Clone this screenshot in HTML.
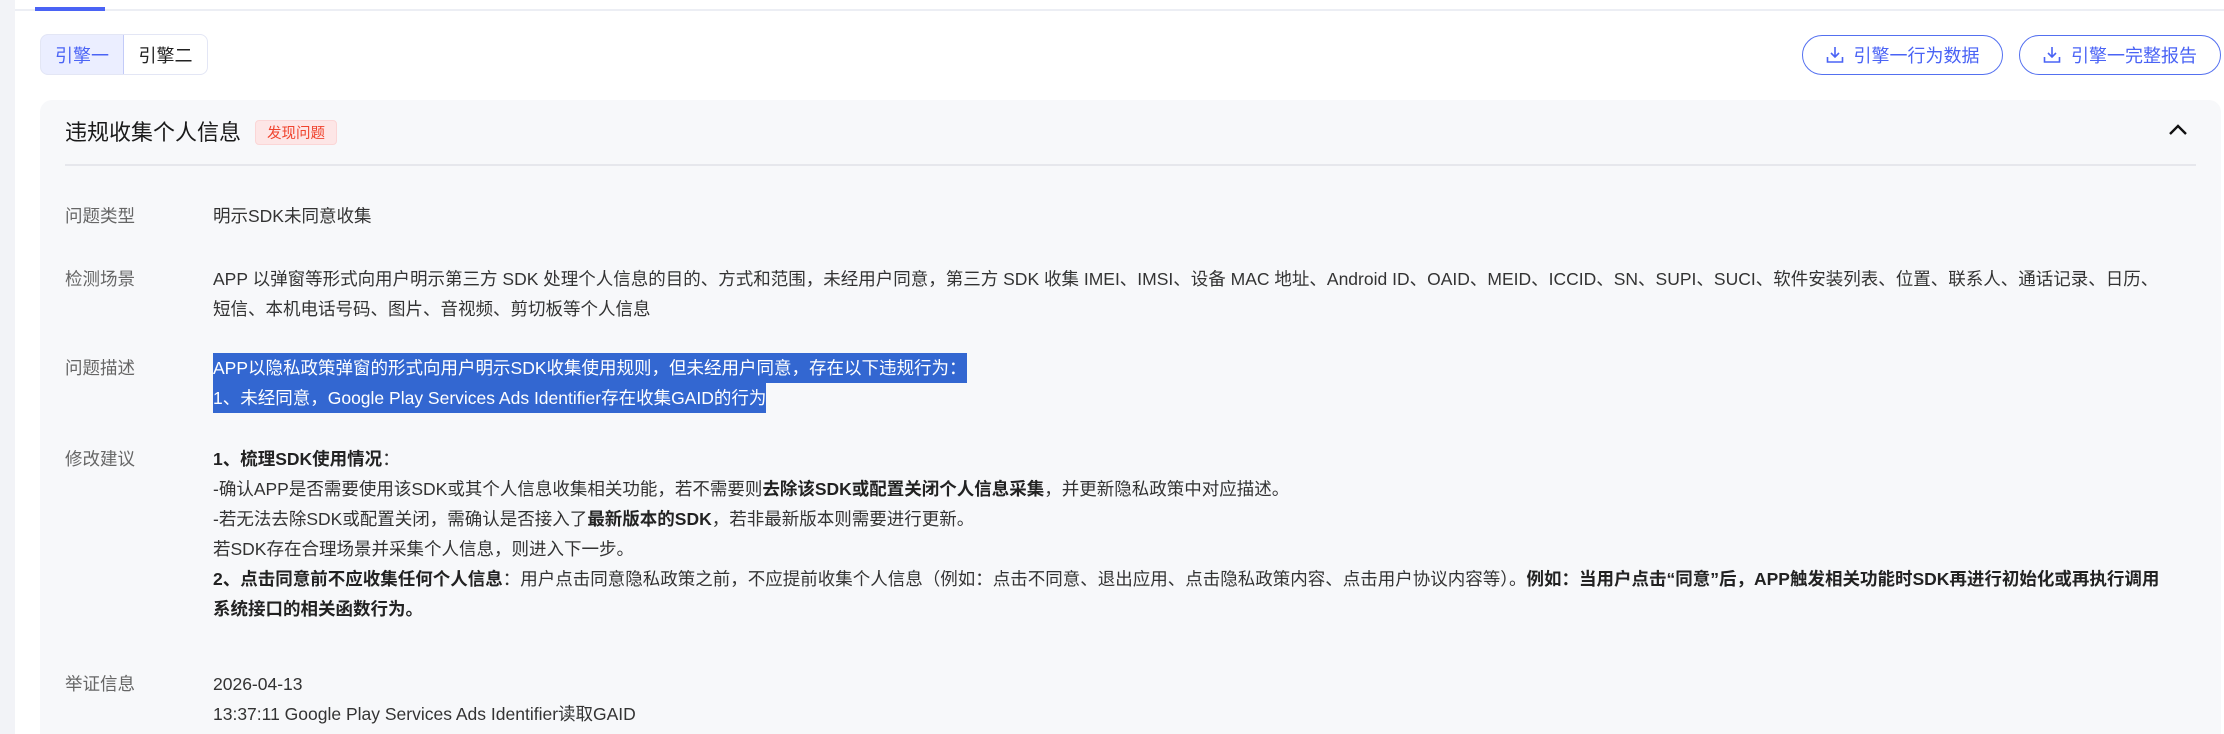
<!DOCTYPE html>
<html style="width:2224px;height:734px;overflow:hidden"><head><meta charset="utf-8"><style>
*{margin:0;padding:0;box-sizing:border-box}
body{width:2224px;height:734px;overflow:hidden;background:#fff;font-family:"Liberation Sans","Noto Sans CJK SC",sans-serif;color:#333;position:relative}
.strip{position:absolute;left:0;top:0;width:15px;height:734px;background:#f2f3f7}
.topline{position:absolute;left:15px;top:9px;right:0;height:2px;background:#eceef4}
.ul{position:absolute;left:35px;top:7px;width:70px;height:4px;background:#4a63f5}
.seg{position:absolute;left:40px;top:34px;width:168px;height:41px;border:1px solid #e3e6f5;border-radius:8px;display:flex;overflow:hidden;font-size:18px}
.seg div{display:flex;align-items:center;justify-content:center}
.seg .a{width:84px;background:#ebeeff;color:#4a63f5;border:1px solid #c3cbf8;border-radius:8px 0 0 8px;margin:-1px 0 -1px -1px}
.seg .b{flex:1;color:#222}
.btn{position:absolute;top:35px;height:40px;border:1.5px solid #5470f0;border-radius:20px;color:#4a63f5;font-size:18px;display:flex;align-items:center;justify-content:center;gap:10px}
.card{position:absolute;left:40px;top:100px;width:2181px;height:634px;background:#f7f8fa;border-radius:12px 12px 0 0}
.title{position:absolute;left:65px;top:119px;font-size:22px;color:#1a1a1a;line-height:28px}
.badge{position:absolute;left:255px;top:120px;width:82px;height:25px;background:#fde6e6;border:1px solid #fbd6d6;border-radius:4px;color:#f0442e;font-size:14.5px;display:flex;align-items:center;justify-content:center}
.div{position:absolute;left:65px;top:164px;width:2131px;height:2px;background:#e6e7ec}
.chev{position:absolute;left:2168px;top:122px}
.lab{position:absolute;left:65px;font-size:17.5px;color:#666;line-height:30px}
.val{position:absolute;left:213px;font-size:17.5px;color:#333;line-height:30px;white-space:nowrap}
.hl{display:inline-block;background:#3367d1;color:#fff;height:30px}
b{color:#222}
</style></head><body>
<div class="strip"></div><div class="topline"></div><div class="ul"></div>
<div class="seg"><div class="a">引擎一</div><div class="b">引擎二</div></div>
<div class="btn" style="left:1802px;width:201px"><svg width="18" height="18" viewBox="0 0 18 18" fill="none" stroke="#4a63f5" stroke-width="1.6"><path d="M9 1v10M5 7l4 4 4-4M1.5 11v5h15v-5"/></svg>引擎一行为数据</div>
<div class="btn" style="left:2019px;width:202px"><svg width="18" height="18" viewBox="0 0 18 18" fill="none" stroke="#4a63f5" stroke-width="1.6"><path d="M9 1v10M5 7l4 4 4-4M1.5 11v5h15v-5"/></svg>引擎一完整报告</div>
<div class="card"></div>
<div class="title">违规收集个人信息</div>
<div class="badge">发现问题</div>
<svg class="chev" width="20" height="14" viewBox="0 0 20 14"><path d="M2 12L10 4l8 8" fill="none" stroke="#111" stroke-width="2.4"/></svg>
<div class="div"></div>
<div class="lab" style="top:201px">问题类型</div>
<div class="val" style="top:201px">明示SDK未同意收集</div>
<div class="lab" style="top:264px">检测场景</div>
<div class="val" style="top:264px">APP 以弹窗等形式向用户明示第三方 SDK 处理个人信息的目的、方式和范围，未经用户同意，第三方 SDK 收集 IMEI、IMSI、设备 MAC 地址、Android ID、OAID、MEID、ICCID、SN、SUPI、SUCI、软件安装列表、位置、联系人、通话记录、日历、<br>短信、本机电话号码、图片、音视频、剪切板等个人信息</div>
<div class="lab" style="top:353px">问题描述</div>
<div class="val" style="top:353px"><span class="hl">APP以隐私政策弹窗的形式向用户明示SDK收集使用规则，但未经用户同意，存在以下违规行为：</span><br><span class="hl">1、未经同意，Google Play Services Ads Identifier存在收集GAID的行为</span></div>
<div class="lab" style="top:444px">修改建议</div>
<div class="val" style="top:444px"><b>1、梳理SDK使用情况</b>：<br>-确认APP是否需要使用该SDK或其个人信息收集相关功能，若不需要则<b>去除该SDK或配置关闭个人信息采集</b>，并更新隐私政策中对应描述。<br>-若无法去除SDK或配置关闭，需确认是否接入了<b>最新版本的SDK</b>，若非最新版本则需要进行更新。<br>若SDK存在合理场景并采集个人信息，则进入下一步。<br><b>2、点击同意前不应收集任何个人信息</b>：用户点击同意隐私政策之前，不应提前收集个人信息（例如：点击不同意、退出应用、点击隐私政策内容、点击用户协议内容等）。<b>例如：当用户点击“同意”后，APP触发相关功能时SDK再进行初始化或再执行调用</b><br><b>系统接口的相关函数行为。</b></div>
<div class="lab" style="top:669px">举证信息</div>
<div class="val" style="top:669px">2026-04-13<br>13:37:11 Google Play Services Ads Identifier读取GAID</div>
</body></html>
